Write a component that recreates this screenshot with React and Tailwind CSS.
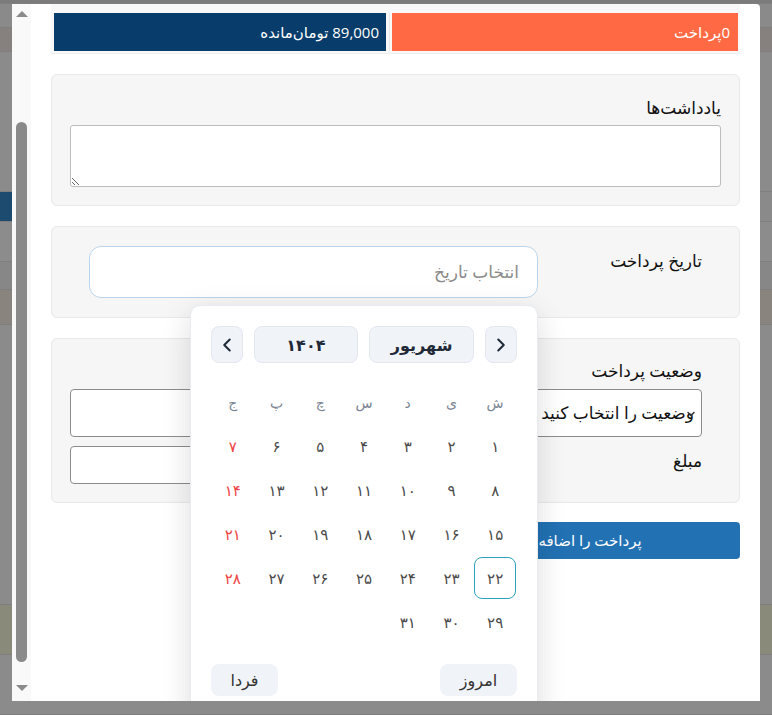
import React from 'react';
import { ChevronLeft, ChevronRight, ChevronDown } from 'lucide-react';

const fa = n => String(n).replace(/\d/g, d => '۰۱۲۳۴۵۶۷۸۹'[d]);

const ruzha = ['ش', 'ی', 'د', 'س', 'چ', 'پ', 'ج'];

const font = { fontFamily: "'Open Sans', 'DejaVu Sans', sans-serif" };

function Taqvim() {
  const cells = [];
  for (let i = 1; i <= 31; i++) cells.push(i);

  return (
    <div className="absolute left-[178px] top-[301px] w-[348px] h-[420px] rounded-[10px] border border-[#e8ecf1] bg-white px-5 pt-5 shadow-[0_8px_30px_rgba(0,0,0,0.14)]" dir="rtl">
      <div className="flex gap-[11px] h-[37px]">
        <button className="w-[32px] rounded-lg bg-[#f0f4f9] border border-[#e3e8ef] flex items-center justify-center text-[#1f2937]">
          <ChevronRight size={22} strokeWidth={2.2} />
        </button>
        <button className="w-[106px] rounded-lg bg-[#f0f4f9] border border-[#e3e8ef] text-[16px] font-semibold text-[#1f2937]">شهریور</button>
        <button className="w-[105px] rounded-lg bg-[#f0f4f9] border border-[#e3e8ef] text-[16px] font-semibold text-[#1f2937]">{fa(1404)}</button>
        <button className="w-[32px] rounded-lg bg-[#f0f4f9] border border-[#e3e8ef] flex items-center justify-center text-[#1f2937]">
          <ChevronLeft size={22} strokeWidth={2.2} />
        </button>
      </div>

      <div className="grid grid-cols-7 mt-[17px]">
        {ruzha.map(r => (
          <div key={r} className="h-[44px] flex items-center justify-center text-[14px] text-[#7b8594]">{r}</div>
        ))}
        {cells.map((d, i) => {
          const jome = i % 7 === 6;
          const sel = d === 22;
          return (
            <div key={d} className="h-[44px] flex items-center justify-center">
              <div className={`w-[42px] h-[42px] flex items-center justify-center text-[15px] rounded-lg ${sel ? 'border-[1.5px] border-[#2ba3bf]' : ''} ${jome ? 'text-[#ef4444]' : 'text-[#4b4b4b]'}`}>
                {fa(d)}
              </div>
            </div>
          );
        })}
      </div>

      <div className="flex justify-between mt-[20px]">
        <button className="w-[77px] h-[32px] rounded-lg bg-[#f0f4f9] text-[16px] text-[#333]">امروز</button>
        <button className="w-[67px] h-[32px] rounded-lg bg-[#f0f4f9] text-[16px] text-[#333]">فردا</button>
      </div>
    </div>
  );
}

export default function App() {
  const pasZamine = [
    { h: 4, c: '#7b7b7b' },
    { h: 24, c: '#8a8a8a' },
    { h: 24, c: '#86817e' },
    { h: 140, c: '#8b8b8b' },
    { h: 30, c: '#8a8a8a', chap: '#1d4b70' },
    { h: 40, c: '#8c8c8c' },
    { h: 28, c: '#878787' },
    { h: 35, c: '#8a847f' },
    { h: 280, c: '#8b8b8b' },
    { h: 50, c: '#8a8a7a' },
    { h: 60, c: '#8b8b8b' },
  ];

  return (
    <div className="relative w-[772px] h-[715px] overflow-hidden bg-[#8b8b8b]" style={font}>
      {/* صفحه پشت مودال */}
      <div className="flex flex-col">
        {pasZamine.map((p, i) => (
          <div key={i} className="flex border-b border-[#7f7f7f]" style={{ height: p.h, backgroundColor: p.c }}>
            <div className="w-[12px]" style={{ backgroundColor: p.chap || 'transparent' }} />
          </div>
        ))}
      </div>

      {/* مودال */}
      <div className="absolute left-[12px] top-[4px] w-[748px] h-[697px] bg-white rounded-tr-[4px] overflow-hidden flex">
        <div className="w-[19px] bg-[#f9f9f9] flex flex-col items-center">
          <div className="mt-[7px] w-0 h-0 border-l-[6px] border-r-[6px] border-b-[6px] border-l-transparent border-r-transparent border-b-[#8a8a8a]" />
          <div className="mt-[105px] w-[11px] h-[540px] rounded-full bg-[#8a8a8a]" />
          <div className="mt-[23px] w-0 h-0 border-l-[6px] border-r-[6px] border-t-[6px] border-l-transparent border-r-transparent border-t-[#8a8a8a]" />
        </div>

        <div className="flex-1 px-5" dir="rtl">
          {/* جدول خلاصه */}
          <div className="flex bg-[#f8f8f8] border-b border-[#eeeeee] pt-[9px] pb-[2px]">
            <div className="w-[351px] px-[2px] border-l border-[#e8e8e8]">
              <div className="h-[38px] bg-[#ff6a44] text-white text-[15px] flex items-center pr-[8px]">0پرداخت</div>
            </div>
            <div className="flex-1 px-[3px]">
              <div className="h-[38px] bg-[#083d6b] text-white text-[15px] flex items-center pr-[7px]">89,000 تومان‌مانده</div>
            </div>
          </div>

          {/* یادداشت‌ها */}
          <div className="mt-[20px] rounded-md border border-[#e9e9e9] bg-[#f6f6f6] px-[18px] pt-[21px] pb-[18px]">
            <div className="h-[24px] text-[17px] text-[#111] leading-[24px]">یادداشت‌ها</div>
            <textarea className="mt-[5px] block w-full h-[62px] rounded-[3px] border border-[#bdbdbd] bg-white" />
          </div>

          {/* تاریخ پرداخت */}
          <div className="mt-[20px] rounded-md border border-[#e9e9e9] bg-[#f6f6f6] px-[37px] pt-[19px] pb-[19px] flex">
            <div className="w-[164px] mt-[3px] h-[24px] text-[17px] leading-[24px] text-[#111]">تاریخ پرداخت</div>
            <div className="flex-1 h-[52px] rounded-xl border border-[#b9d4ea] bg-white flex items-center pr-[18px] text-[17px] text-[#8a8a8a] tracking-[1px]">انتخاب تاریخ</div>
          </div>

          {/* وضعیت و مبلغ */}
          <div className="mt-[20px] rounded-md border border-[#e9e9e9] bg-[#f6f6f6] pl-[18px] pr-[37px] pt-[20px] pb-[18px]">
            <div className="h-[24px] text-[17px] leading-[24px] text-[#111]">وضعیت پرداخت</div>
            <div className="relative mt-[6px] h-[48px] rounded-[4px] border border-[#8c8c8c] bg-white flex items-center pr-[7px] text-[17px] text-[#111]">
              وضعیت را انتخاب کنید
              <ChevronDown size={12} strokeWidth={3} className="absolute right-[4px] top-[18px] text-[#333]" />
            </div>
            <div className="mt-[9px] flex items-start justify-between">
              <div className="mt-[3px] h-[24px] text-[17px] leading-[24px] text-[#111]">مبلغ</div>
              <div className="w-[400px] h-[38px] rounded-[4px] border border-[#8c8c8c] bg-white" />
            </div>
          </div>

          <div className="mt-[19px] w-[300px] h-[37px] rounded-[4px] bg-[#2271b3] text-white text-[15px] flex items-center justify-center">پرداخت را اضافه</div>
        </div>

        <Taqvim />
      </div>
    </div>
  );
}
